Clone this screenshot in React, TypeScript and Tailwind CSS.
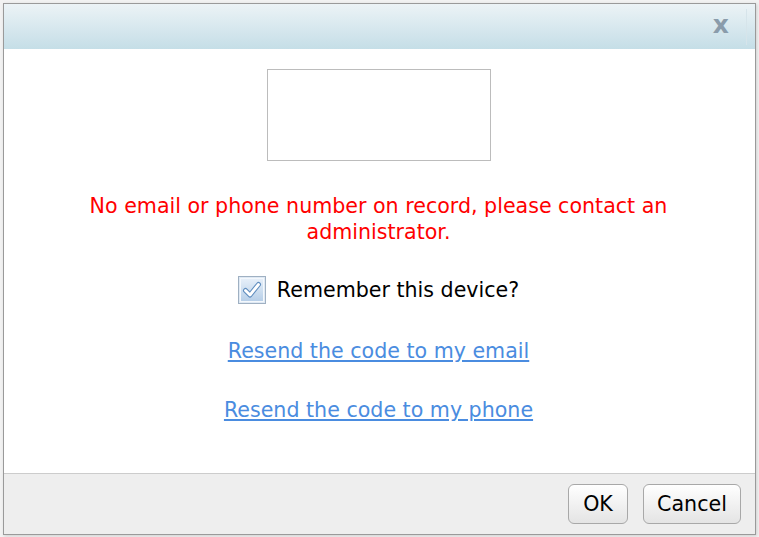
export default function App() {
  const font = { fontFamily: '"DejaVu Sans", Verdana, sans-serif' };
  return (
    <div className="w-[759px] h-[537px] bg-[#f2f2f2] pt-[3px] pl-[3px]" style={font}>
      <div className="w-[753px] h-[532px] border border-[#9a9a9a] bg-white flex flex-col shadow-[1px_1px_3px_rgba(0,0,0,0.15)]">
        <div className="h-[45px] bg-gradient-to-b from-[#ecf3f6] to-[#c5dee7] flex items-center justify-end">
          <span className="text-[#8a9cab] font-bold text-[25px] leading-none mr-[17px] -mt-[4px]">x</span>
          <div className="w-px h-[36px] bg-[#d6e4ea] mr-[8px]" />
        </div>
        <div className="flex-1 flex flex-col items-center pr-[2px]">
          <div className="mt-[20px] w-[224px] h-[92px] border border-[#bcbcbc]" />
          <p className="mt-[32px] text-center text-[#ff0000] text-[20.6px] leading-[26px] w-[620px]">
            No email or phone number on record, please contact an administrator.
          </p>
          <label className="mt-[31px] flex items-center gap-[11px] text-[20.6px] leading-[26px] text-black">
            <span className="w-[28px] h-[28px] border border-[#9fb0c2] bg-[#dfe9f4] p-[1px] flex">
              <span className="flex-1 border border-[#f4f8fc] bg-gradient-to-b from-[#e6eff9] to-[#b7cfe8] flex items-center justify-center">
                <svg width="20" height="18" viewBox="0 0 20 18">
                  <path d="M3.5 9.5 L8 14 L16.5 3.5" fill="none" stroke="#5f8dbf" strokeWidth="5" strokeLinejoin="round" strokeLinecap="round" />
                  <path d="M3.5 9.5 L8 14 L16.5 3.5" fill="none" stroke="#ffffff" strokeWidth="2.8" strokeLinejoin="round" strokeLinecap="round" />
                </svg>
              </span>
            </span>
            Remember this device?
          </label>
          <a href="#" className="mt-[34px] text-[20.6px] leading-[26px] text-[#4a8ce0] underline">Resend the code to my email</a>
          <a href="#" className="mt-[33px] text-[20.6px] leading-[26px] text-[#4a8ce0] underline">Resend the code to my phone</a>
        </div>
        <div className="h-[61px] bg-[#eeeeee] border-t border-[#cccccc] flex items-center justify-end gap-[15px] pr-[14px]">
          <button className="w-[60px] h-[40px] rounded-[6px] border border-[#a8a8a8] bg-gradient-to-b from-[#ffffff] to-[#e4e4e4] text-[20.6px] text-black">OK</button>
          <button className="w-[98px] h-[40px] rounded-[6px] border border-[#a8a8a8] bg-gradient-to-b from-[#ffffff] to-[#e4e4e4] text-[20.6px] text-black">Cancel</button>
        </div>
      </div>
    </div>
  );
}
